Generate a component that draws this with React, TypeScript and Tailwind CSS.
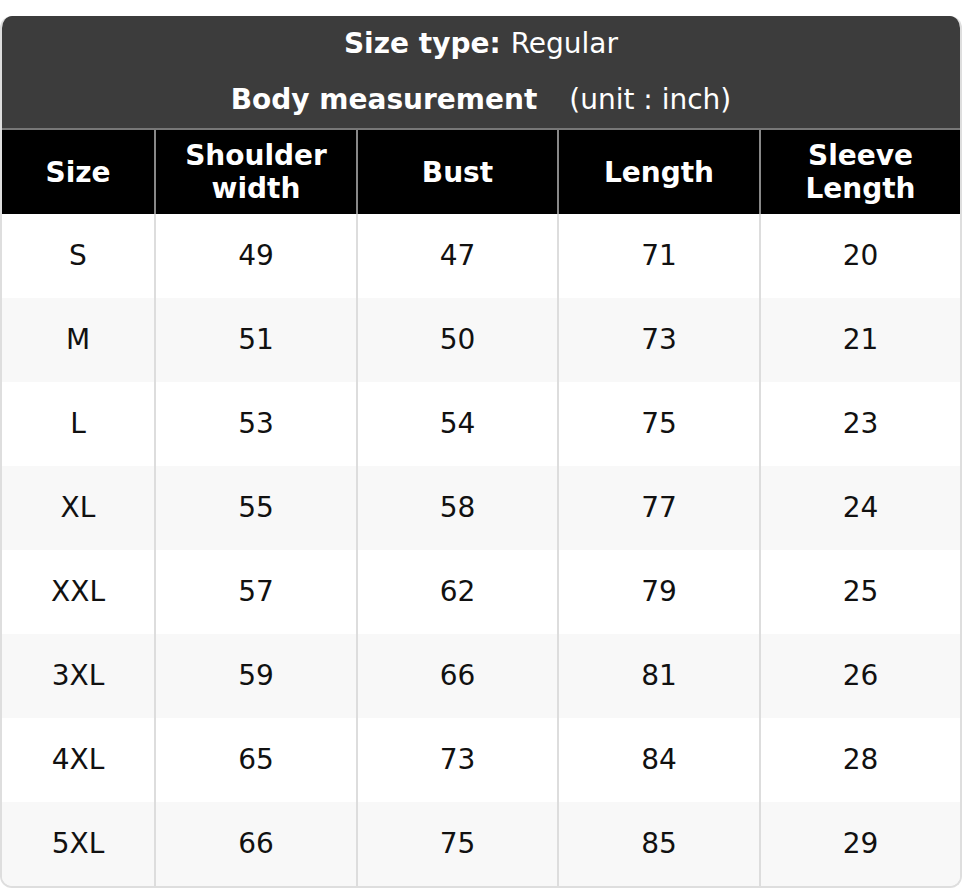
const columns = ['Size', 'Shoulder width', 'Bust', 'Length', 'Sleeve Length'];

const rows: string[][] = [
  ['S', '49', '47', '71', '20'],
  ['M', '51', '50', '73', '21'],
  ['L', '53', '54', '75', '23'],
  ['XL', '55', '58', '77', '24'],
  ['XXL', '57', '62', '79', '25'],
  ['3XL', '59', '66', '81', '26'],
  ['4XL', '65', '73', '84', '28'],
  ['5XL', '66', '75', '85', '29'],
];

export default function App() {
  return (
    <div className="bg-white w-[962px] h-[888px] pt-4 font-['DejaVu_Sans',sans-serif]">
      <div className="w-[962px] rounded-xl overflow-hidden border-2 border-t-0 border-[#dedede]">
        {/* Title block */}
        <div className="bg-[#3c3c3c] text-white text-[28px] -mx-[2px]">
          <div className="h-[56px] flex items-center justify-center">
            <span className="font-bold">Size type:</span>
            <span className="ml-[10px]">Regular</span>
          </div>
          <div className="h-[56px] flex items-center justify-center">
            <span className="font-bold">Body measurement</span>
            <span className="ml-[32px]">(unit : inch)</span>
          </div>
        </div>
        <div className="h-[2px] bg-[#777777] -mx-[2px]" />

        {/* Column headers */}
        <div className="grid grid-cols-[152px_202px_201px_202px_201px] bg-black text-white text-[28px] font-bold leading-[33px]">
          {columns.map((c, i) => (
            <div
              key={c}
              className={`h-[84px] flex items-center justify-center text-center px-2 ${
                i > 0 ? 'border-l-2 border-[#888888]' : ''
              }`}
            >
              {c === 'Shoulder width' ? (
                <span>Shoulder<br />width</span>
              ) : c === 'Sleeve Length' ? (
                <span>Sleeve<br />Length</span>
              ) : (
                c
              )}
            </div>
          ))}
        </div>

        {/* Data rows */}
        {rows.map((r, ri) => (
          <div
            key={r[0]}
            className={`grid grid-cols-[152px_202px_201px_202px_201px] text-[28px] text-[#111111] ${
              ri % 2 === 1 ? 'bg-[#f8f8f8]' : 'bg-white'
            }`}
          >
            {r.map((v, i) => (
              <div
                key={i}
                className={`h-[84px] flex items-center justify-center ${
                  i > 0 ? 'border-l-2 border-[#dddddd]' : ''
                }`}
              >
                {v}
              </div>
            ))}
          </div>
        ))}
      </div>
    </div>
  );
}
